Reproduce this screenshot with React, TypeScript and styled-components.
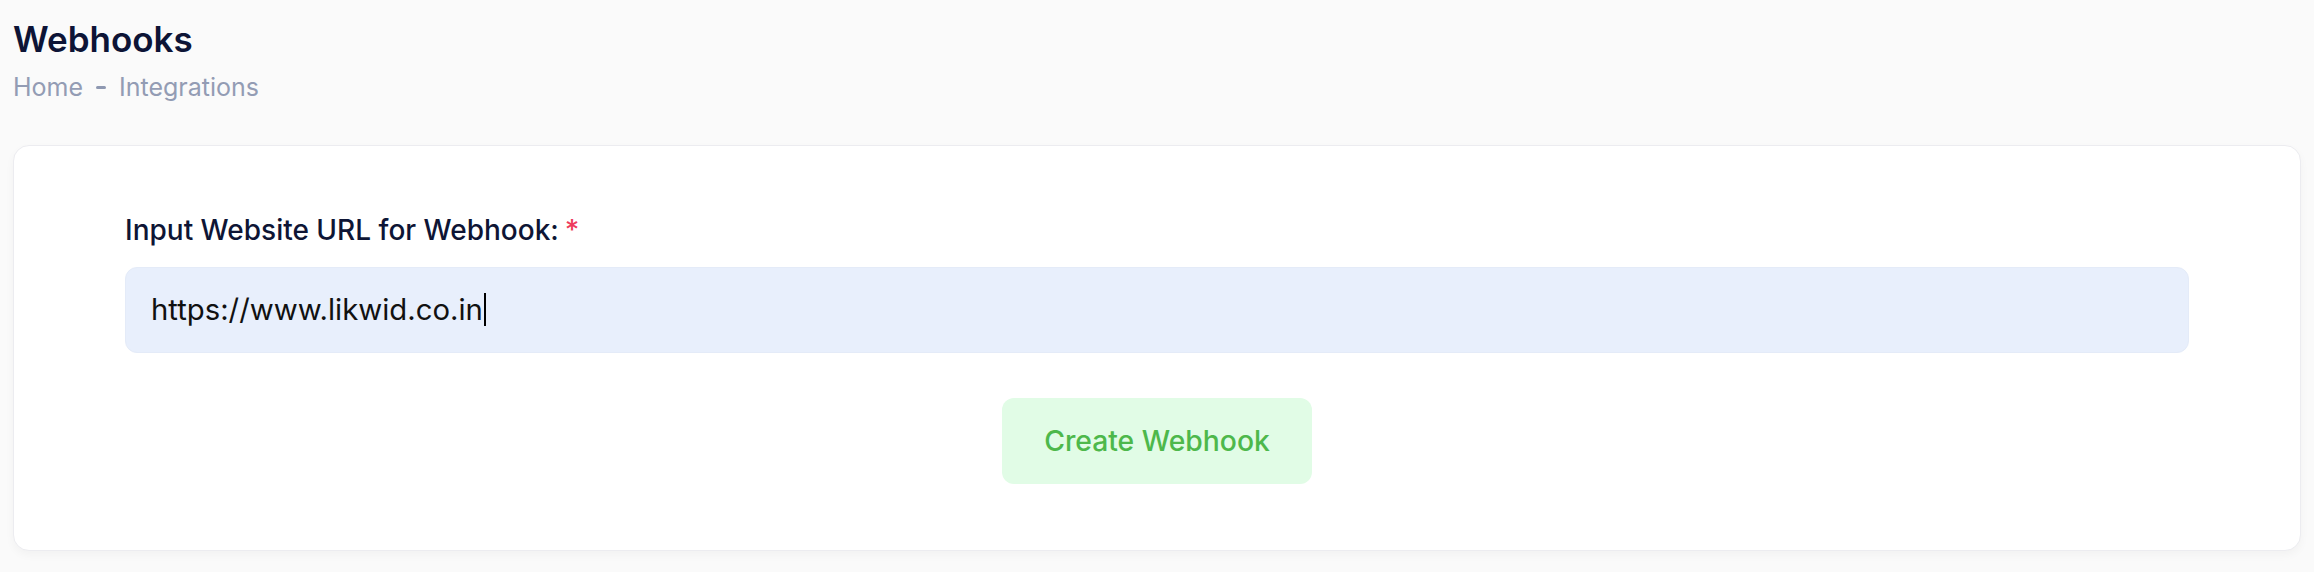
import React from 'react';
import styled, { createGlobalStyle } from 'styled-components';

const GlobalStyle = createGlobalStyle`
    body {
        margin: 0;
        background-color: #fafafa;
        font-family: Inter, "Noto Sans", "Liberation Sans", sans-serif;
    }
`;

const Page = styled.div`
    padding: 18px 13px 22px;
`;

const Header = styled.div`
    display: flex;
    flex-direction: column;
    gap: 11px;
`;

const Title = styled.h1`
    margin: 0;
    font-size: 35px;
    line-height: 1.23;
    font-weight: 600;
    color: #0d1436;
`;

const Breadcrumb = styled.div`
    display: flex;
    align-items: center;
    gap: 13px;
    font-size: 25px;
    line-height: 1.2;
    color: #939cb4;
`;

const Bullet = styled.span`
    width: 10px;
    height: 3px;
    border-radius: 2px;
    background-color: #8e98b1;
`;

const Card = styled.div`
    margin-top: 43px;
    background-color: #ffffff;
    border: 1px solid #ececf0;
    border-radius: 16px;
    box-shadow: 0 4px 10px rgba(0, 0, 0, 0.035);
    padding: 68px 111px 66px;
    display: flex;
    flex-direction: column;
`;

const Label = styled.label`
    font-size: 28px;
    line-height: 1.2;
    font-weight: 500;
    color: #0e1535;
`;

const Required = styled.span`
    color: #ee3b5d;
    margin-left: 6px;
`;

const UrlBox = styled.div`
    margin-top: 19px;
    height: 86px;
    box-sizing: border-box;
    display: flex;
    align-items: center;
    padding: 0 25px;
    background-color: #e8effc;
    border: 1px solid #e4ebf8;
    border-radius: 12px;
    font-size: 29.3px;
    color: #111111;
`;

const Caret = styled.span`
    display: inline-block;
    width: 2px;
    height: 33px;
    margin-left: 1px;
    background-color: #000000;
`;

const Actions = styled.div`
    margin-top: 45px;
    display: flex;
    justify-content: center;
`;

const CreateButton = styled.button`
    width: 310px;
    height: 86px;
    border: none;
    border-radius: 12px;
    background-color: #e1fce6;
    color: #4db84b;
    font-family: inherit;
    font-size: 28.3px;
    font-weight: 500;
    cursor: pointer;
`;

const App = () => {
    return (
        <>
            <GlobalStyle />
            <Page>
                <Header>
                    <Title>Webhooks</Title>
                    <Breadcrumb>
                        <span>Home</span>
                        <Bullet />
                        <span>Integrations</span>
                    </Breadcrumb>
                </Header>
                <Card>
                    <Label>
                        Input Website URL for Webhook:<Required>*</Required>
                    </Label>
                    <UrlBox role="textbox">
                        https://www.likwid.co.in
                        <Caret />
                    </UrlBox>
                    <Actions>
                        <CreateButton>Create Webhook</CreateButton>
                    </Actions>
                </Card>
            </Page>
        </>
    );
};

export default App;
